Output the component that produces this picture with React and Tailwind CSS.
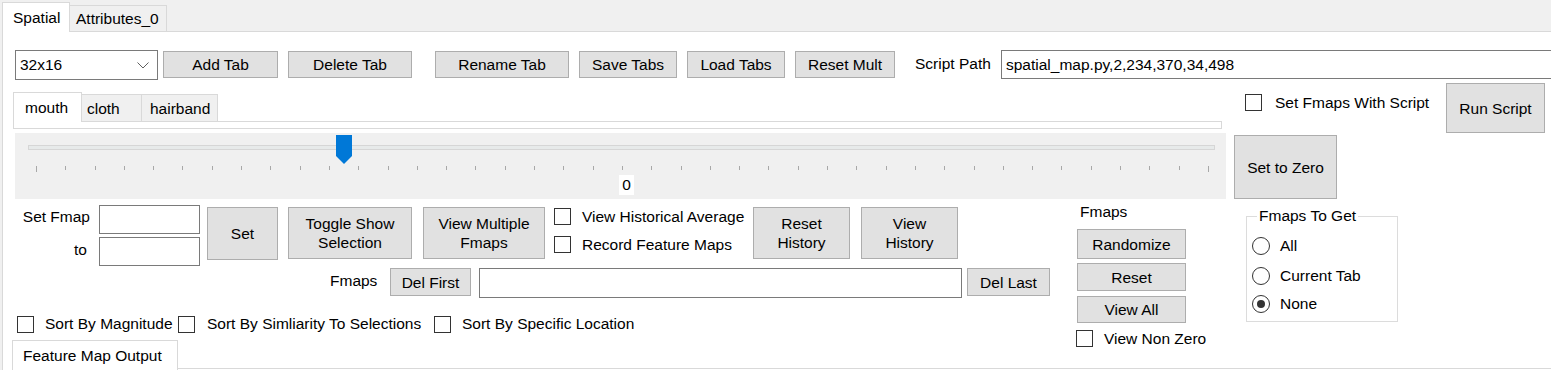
import React from 'react';

function Btn({ className = '', children }) {
  return (
    <div className={`flex items-center justify-center text-center leading-[19px] bg-[#e1e1e1] border border-[#adadad] shrink-0 ${className}`}>
      {children}
    </div>
  );
}

function Box() {
  return <span className="w-[17px] h-[17px] border border-[#333] bg-white shrink-0" />;
}

function Check({ label, className = '', gap = 'ml-[11px]' }) {
  return (
    <div className={`flex items-center h-[17px] shrink-0 ${className}`}>
      <Box />
      <span className={`${gap} whitespace-nowrap`}>{label}</span>
    </div>
  );
}

function Radio({ label, checked, className = '' }) {
  return (
    <div className={`flex items-center h-[20px] ${className}`}>
      <span className="w-[18px] h-[18px] rounded-full border border-[#333] bg-white flex items-center justify-center shrink-0">
        {checked && <span className="w-[8px] h-[8px] rounded-full bg-[#333]" />}
      </span>
      <span className="ml-[10px] whitespace-nowrap">{label}</span>
    </div>
  );
}

function TextBox({ className = '', children }) {
  return (
    <div className={`border border-[#7a7a7a] bg-white flex items-center shrink-0 ${className}`}>
      {children}
    </div>
  );
}

const ticks = Array.from({ length: 41 }, (_, i) => i);

export default function App() {
  return (
    <div className="w-[1551px] h-[370px] overflow-hidden bg-[#f0f0f0] text-black font-['Liberation_Sans',Arial,sans-serif] text-[15.5px] flex flex-col">
      {/* top tab strip */}
      <div className="h-[31px] flex items-end pl-[2px] shrink-0">
        <div className="w-[68px] h-[30px] -mb-px relative z-10 bg-white border border-b-0 border-[#d9d9d9] pl-[10px] pt-[3px]">Spatial</div>
        <div className="w-[97px] h-[26px] border border-b-0 border-l-0 border-[#d9d9d9] pl-[6px] pt-[1px]">Attributes_0</div>
      </div>

      <div className="flex-1 ml-[2px] bg-white border-l border-t border-[#d9d9d9] flex flex-col">
        {/* row 1 */}
        <div className="mt-[18px] flex items-start h-[30px]">
          <TextBox className="ml-[12px] w-[143px] h-[30px] justify-between pl-[4px] pr-[8px]">
            <span>32x16</span>
            <svg width="12" height="7" viewBox="0 0 12 7" fill="none">
              <path d="M0.5 0.5 L6 6 L11.5 0.5" stroke="#606060" strokeWidth="1" />
            </svg>
          </TextBox>
          <Btn className="ml-[5px] mt-px w-[115px] h-[27px]">Add Tab</Btn>
          <Btn className="ml-[10px] mt-px w-[124px] h-[27px]">Delete Tab</Btn>
          <Btn className="ml-[23px] mt-px w-[134px] h-[27px]">Rename Tab</Btn>
          <Btn className="ml-[10px] mt-px w-[98px] h-[27px]">Save Tabs</Btn>
          <Btn className="ml-[10px] mt-px w-[98px] h-[27px]">Load Tabs</Btn>
          <Btn className="ml-[10px] mt-px w-[100px] h-[27px]">Reset Mult</Btn>
          <span className="ml-[20px] w-[86px] h-[29px] leading-[27px] whitespace-nowrap">Script Path</span>
          <TextBox className="flex-1 h-[29px] pl-[4px] border-r-0">spatial_map.py,2,234,370,34,498</TextBox>
        </div>

        {/* section 2 */}
        <div className="mt-[3px] flex h-[116px]">
          <div className="w-[1223px] flex flex-col shrink-0">
            <div className="ml-[10px] mt-[8px] h-[30px] flex items-end">
              <div className="w-[69px] h-[30px] -mb-px relative z-10 bg-white border border-b-0 border-[#d9d9d9] pl-[11px] pt-[3px]">mouth</div>
              <div className="w-[60px] h-[27px] bg-[#f0f0f0] border border-b-0 border-l-0 border-[#d9d9d9] pl-[5px] pt-[2px]">cloth</div>
              <div className="w-[76px] h-[27px] bg-[#f0f0f0] border border-b-0 border-l-0 border-[#d9d9d9] pl-[8px] pt-[2px]">hairband</div>
            </div>
            <div className="ml-[10px] w-[1209px] h-[8px] border border-[#d9d9d9] bg-white" />
            <div className="ml-[12px] mt-[4px] w-[1211px] h-[66px] bg-[#f0f0f0] flex flex-col relative">
              <div className="ml-[13px] mt-[12px] w-[1187px] h-[5px] bg-[#e7eaea] border border-[#d6d6d6]" />
              <svg className="absolute left-[321px] top-[2px]" width="16" height="29" viewBox="0 0 16 29">
                <path d="M0 0 H16 V21 L8 29 L0 21 Z" fill="#0078d7" />
              </svg>
              <div className="ml-[21px] mt-[16px] w-[1173px] h-[6px] flex justify-between items-start">
                {ticks.map((i) => (
                  <span key={i} className={`w-px bg-[#a8a8a8] ${i === 0 || i === 40 ? 'h-[6px]' : 'h-[4px]'}`} />
                ))}
              </div>
              <div className="ml-[604px] mt-[3px] w-[15px] h-[20px] bg-white flex items-center justify-center leading-none">0</div>
            </div>
          </div>
          <div className="flex flex-col">
            <div className="flex items-start h-[50px]">
              <Check label="Set Fmaps With Script" gap="ml-[13px]" className="ml-[19px] mt-[11px] w-[201px]" />
              <Btn className="w-[99px] h-[50px]">Run Script</Btn>
            </div>
            <Btn className="ml-[8px] mt-[2px] w-[103px] h-[64px]">Set to Zero</Btn>
          </div>
        </div>

        {/* section 3 */}
        <div className="h-[141px] flex items-start shrink-0">
          <div className="w-[1074px] flex flex-col shrink-0">
            <div className="mt-[6px] flex items-start h-[61px]">
              <div className="flex flex-col">
                <div className="flex items-center h-[29px]">
                  <span className="w-[87px] text-right pb-[5px] whitespace-nowrap">Set Fmap</span>
                  <TextBox className="ml-[9px] w-[101px] h-[29px]" />
                </div>
                <div className="flex items-center h-[29px] mt-[3px]">
                  <span className="w-[87px] text-right pr-[3px] pb-[4px]">to</span>
                  <TextBox className="ml-[9px] w-[101px] h-[29px]" />
                </div>
              </div>
              <Btn className="ml-[7px] mt-[2px] w-[71px] h-[53px]">Set</Btn>
              <Btn className="ml-[10px] mt-[2px] w-[124px] h-[52px]">Toggle Show<br />Selection</Btn>
              <Btn className="ml-[11px] mt-[2px] w-[122px] h-[52px]">View Multiple<br />Fmaps</Btn>
              <div className="ml-[9px] mt-[3px] w-[199px] flex flex-col shrink-0">
                <Check label="View Historical Average" />
                <Check label="Record Feature Maps" className="mt-[11px]" />
              </div>
              <Btn className="mt-[2px] w-[97px] h-[52px]">Reset<br />History</Btn>
              <Btn className="ml-[11px] mt-[2px] w-[97px] h-[52px]">View<br />History</Btn>
            </div>
            <div className="mt-[2px] flex items-start h-[30px]">
              <span className="ml-[327px] w-[60px] h-[28px] leading-[25px]">Fmaps</span>
              <Btn className="w-[81px] h-[28px]">Del First</Btn>
              <TextBox className="ml-[8px] w-[483px] h-[30px]" />
              <Btn className="ml-[5px] w-[83px] h-[28px]">Del Last</Btn>
            </div>
            <div className="mt-[17px] flex items-center h-[18px]">
              <Check label="Sort By Magnitude" className="ml-[14px] w-[161px]" />
              <Check label="Sort By Simliarity To Selections" gap="ml-[12px]" className="w-[256px]" />
              <Check label="Sort By Specific Location" />
            </div>
          </div>

          <div className="w-[109px] flex flex-col shrink-0">
            <span className="mt-[3px] pl-[3px] h-[20px] leading-[20px]">Fmaps</span>
            <Btn className="mt-[7px] w-[109px] h-[30px]">Randomize</Btn>
            <Btn className="mt-[4px] w-[109px] h-[28px]">Reset</Btn>
            <Btn className="mt-[5px] w-[109px] h-[27px]">View All</Btn>
            <Check label="View Non Zero" className="-ml-px mt-[7px]" />
          </div>

          <div className="ml-[60px] mt-[17px] w-[152px] h-[106px] border border-[#dcdcdc] relative flex flex-col pl-[5px] pt-[19px]">
            <span className="absolute left-[10px] -top-[11px] bg-white px-[2px] leading-[20px] whitespace-nowrap">Fmaps To Get</span>
            <Radio label="All" />
            <Radio label="Current Tab" className="mt-[10px]" />
            <Radio label="None" checked className="mt-[8px]" />
          </div>
        </div>

        {/* bottom tab strip */}
        <div className="h-[30px] flex shrink-0">
          <div className="ml-[9px] w-[166px] h-[30px] bg-white border border-b-0 border-[#d9d9d9] pl-[10px] pt-[3px] whitespace-nowrap">Feature Map Output</div>
          <div className="flex-1 h-[29px] border-b border-[#d9d9d9]" />
        </div>
      </div>
    </div>
  );
}
